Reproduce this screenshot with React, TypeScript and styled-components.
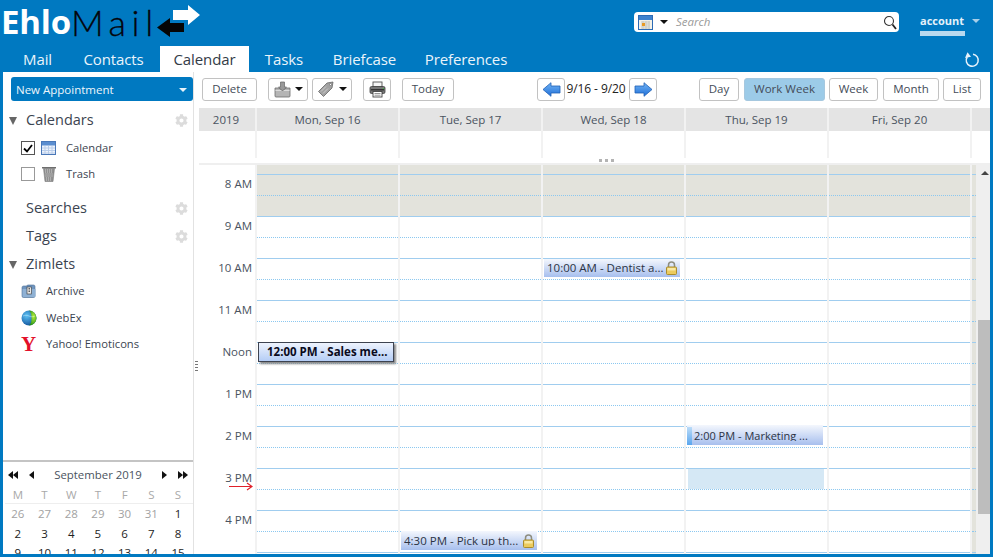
import React from "react";
import styled, { createGlobalStyle } from "styled-components";
import { FaCog } from "react-icons/fa";

const FONT = `"Open Sans", "Noto Sans", "Liberation Sans", sans-serif`;

const Global = createGlobalStyle`
  html, body { margin: 0; padding: 0; height: 100%; overflow: hidden; background: #0079c1; }
  * { box-sizing: border-box; }
`;

const Page = styled.div`
  width: 993px; height: 557px; display: flex; flex-direction: column;
  background: #0079c1; padding: 0 3px 3px; font-family: ${FONT}; color: #333; overflow: hidden;
`;
const Header = styled.header`height: 46px; display: flex; align-items: flex-start; flex: none;`;
const Logo = styled.div`display: flex; align-items: flex-start; width: 631px; height: 46px;`;
const LogoStrong = styled.span`font: 700 33px/44px "Open Sans", sans-serif; color: #fff; letter-spacing: -.2px; margin-left: -2px;`;
const LogoThin = styled.span`display: block; width: 86px; font: 300 36px/44px Lato, sans-serif; color: #05050c; letter-spacing: 5.6px; -webkit-text-stroke: .3px #05050c;`;
const LogoArrows = styled.svg`margin: 4px 0 0 0; flex: none;`;

const SearchBox = styled.div`
  width: 265px; height: 20px; margin-top: 12px; background: #fff; border-radius: 4px;
  display: flex; align-items: center; padding: 0 2px 0 4px; flex: none;
`;
const SearchCaret = styled.span`
  width: 0; height: 0; border: 4px solid transparent; border-top: 4px solid #111; border-bottom: 0; margin: 0 8px 0 7px;
`;
const SearchText = styled.span`font: italic 11.5px/1 ${FONT}; color: #9a9a9a; flex: 1;`;
const Account = styled.div`margin: 13px 0 0 21px; display: flex; align-items: flex-start; flex: none;`;
const AccountName = styled.span`
  font: 700 11px/15px ${FONT}; color: #e4f1fa; padding-bottom: 5px; width: 45px; display: block;
  border-bottom: 5px solid #b9d9ef; height: 23px;
`;
const AccountCaret = styled.span`
  width: 0; height: 0; border: 4px solid transparent; border-top: 4px solid #a9cfe9; border-bottom: 0; margin: 6px 0 0 7px;
`;

const TabBar = styled.nav`height: 26px; display: flex; align-items: stretch; flex: none; padding-left: 5px;`;
const Tab = styled.div<{ $w: number; $active?: boolean }>`
  width: ${(p) => p.$w}px; text-align: center; font: 400 15px/27px ${FONT}; letter-spacing: -.1px;
  color: ${(p) => (p.$active ? "#333b47" : "#eaf4fb")}; background: ${(p) => (p.$active ? "#fff" : "transparent")};
`;
const RefreshWrap = styled.div`margin-left: auto; margin-right: 10px; padding-top: 5px;`;

const Body = styled.div`flex: 1; min-height: 0; display: flex; background: #fff;`;
const Sidebar = styled.aside`width: 191px; flex: none; border-right: 1px solid #e2e2e2; display: flex; flex-direction: column; overflow: hidden;`;
const NewButton = styled.div`
  margin: 5px 0 0 8px; height: 24px; width: 182px; background: #0079c1; border-radius: 3px; flex: none;
  display: flex; align-items: center; justify-content: space-between; padding: 1px 6px 0 5px;
  font: 400 11.5px/1 ${FONT}; color: #eef6fb;
`;
const WhiteCaret = styled.span`width: 0; height: 0; border: 4px solid transparent; border-top: 4px solid #e8f3fa; border-bottom: 0;`;
const Tree = styled.div`flex: 1; padding-top: 7px;`;
const Section = styled.div<{ $mt?: number }>`
  height: 24px; display: flex; align-items: center; padding: 1px 5px 0 6px; margin-top: ${(p) => p.$mt ?? 0}px;
  font: 400 14.5px/1 ${FONT}; color: #3b4450;
`;
const Triangle = styled.span`width: 0; height: 0; border-left: 4px solid transparent; border-right: 4px solid transparent; border-top: 8px solid #666; margin-right: 9px; flex: none;`;
const NoTriangle = styled.span`width: 17px; flex: none;`;
const SectionLabel = styled.span`flex: 1;`;
const Row = styled.div<{ $h?: number; $mt?: number }>`
  height: ${(p) => p.$h ?? 26}px; margin-top: ${(p) => p.$mt ?? 0}px; display: flex; align-items: center; padding-left: 18px;
  font: 400 11.2px/1 ${FONT}; color: #3b4450;
`;
const Check = styled.span<{ $on?: boolean }>`
  width: 14px; height: 14px; border: 1px solid ${(p) => (p.$on ? "#555" : "#999")}; background: #fff; flex: none;
  display: flex; align-items: center; justify-content: center; margin-right: 6px;
`;
const RowIcon = styled.span<{ $w: number }>`width: ${(p) => p.$w}px; display: flex; justify-content: flex-start; align-items: center; flex: none;`;
const YahooMark = styled.span`font: 700 21px/1 "Liberation Serif", serif; color: #e3102a;`;

const MiniCal = styled.div`height: 94px; border-top: 2px solid #c4c4c4; flex: none; padding: 0 0 0 1.5px; overflow: hidden;`;
const MiniHead = styled.div`
  height: 26px; display: flex; align-items: center; justify-content: space-between; padding: 0 5px 0 3.5px;
  font: 400 11.4px/1 ${FONT}; color: #4a5360;
`;
const MiniNavGroup = styled.span`display: flex; gap: 11px; align-items: center; color: #111;`;
const MiniGrid = styled.div`display: grid; grid-template-columns: repeat(7, 26.7px); justify-content: start;`;
const MiniWeek = styled(MiniGrid)`border-bottom: 1px solid #eee; height: 16px;`;
const MiniCell = styled.span<{ $tone?: "head" | "dim" }>`
  height: 19.5px; text-align: center; font: 400 11.5px/20px ${FONT};
  color: ${(p) => (p.$tone === "head" ? "#a9a9a9" : p.$tone === "dim" ? "#a2a2a2" : "#222")};
`;
const MiniHeadCell = styled(MiniCell)`height: 16px; line-height: 14px;`;

const Sash = styled.div`width: 5px; flex: none; display: flex; align-items: center; justify-content: center; padding-top: 108px;`;
const Grip = styled.span`width: 3px; height: 12px; background: repeating-linear-gradient(#777 0 1px, transparent 1px 3px);`;

const Main = styled.main`flex: 1; min-width: 0; display: flex; flex-direction: column;`;
const Toolbar = styled.div`height: 36px; flex: none; display: flex; align-items: flex-start; padding: 6px 0 0 3px;`;
const Btn = styled.div<{ $w: number; $ml?: number; $on?: boolean }>`
  width: ${(p) => p.$w}px; height: 23px; margin-left: ${(p) => p.$ml ?? 0}px; flex: none;
  border: 1px solid ${(p) => (p.$on ? "#a6c8df" : "#c2c2c2")}; border-radius: 3px;
  background: ${(p) => (p.$on ? "#9ccbe8" : "#fff")};
  display: flex; align-items: center; justify-content: center; gap: 4px; padding-bottom: 1px;
  font: 400 11.5px/1 ${FONT}; color: #444c58;
`;
const BlackCaret = styled.span`width: 0; height: 0; border: 4px solid transparent; border-top: 4px solid #111; border-bottom: 0;`;
const RangeText = styled.span`width: 64px; flex: none; text-align: center; font: 400 12px/22px ${FONT}; color: #222; letter-spacing: -.1px; padding-right: 2px;`;

const HeaderRow = styled.div`height: 23px; display: flex; flex: none; background: #e4e4e4; font: 400 11.5px/23px ${FONT}; color: #4a5360;`;
const YearCell = styled.div`width: 58px; text-align: center; flex: none; border-right: 2px solid #f2f2f2; padding-right: 2px;`;
const DayCell = styled.div`width: 143px; text-align: center; flex: none; border-right: 2px solid #f2f2f2;`;
const AllDayRow = styled.div`height: 27px; display: flex; flex: none;`;
const AllDayHead = styled.div`width: 58px; flex: none; border-right: 2px solid #f2f2f2;`;
const AllDayCell = styled.div`width: 143px; flex: none; border-right: 2px solid #f2f2f2;`;
const AllDayResize = styled.div`
  height: 7px; flex: none; border-bottom: 2px solid #efefef; display: flex; justify-content: flex-start;
  padding-left: 400px; gap: 3px;
`;
const ResizeDot = styled.span`width: 3px; height: 3px; background: #b3b3b3; margin-top: 1px;`;

const GridWrap = styled.div`flex: 1; min-height: 0; display: flex; overflow: hidden;`;
const TimeCol = styled.div`width: 58px; flex: none; border-right: 2px solid #f2f2f2; padding-top: 10px; position: relative;`;
const TimeLabel = styled.div`height: 42px; text-align: right; padding-right: 3px; font: 400 11.5px/17px ${FONT}; color: #4a5360;`;
const NowArrow = styled.svg`position: absolute; left: 30px; top: 317px;`;
const DayCol = styled.div`width: 143px; flex: none; border-right: 2px solid #f2f2f2; position: relative;`;
const LeadSlot = styled.div`height: 10px; background: #e3e3dc; border-bottom: 1px solid #a0cdef;`;
const HourSlot = styled.div<{ $off?: boolean }>`
  height: 42px; position: relative; border-bottom: 1px solid #a0cdef;
  background: ${(p) => (p.$off ? "#e3e3dc" : "#fff")};
  &::after { content: ""; position: absolute; left: 0; right: 0; top: 20px; border-top: 1px dotted #8cc8f0; }
`;
const Strip = styled.div`width: 4px; flex: none;`;
const StripLead = styled(LeadSlot)``;
const StripSlot = styled(HourSlot)`background: #e3e3dc;`;
const Scrollbar = styled.div`width: 14px; flex: none; background: #efefef; position: relative;`;
const ScrollUp = styled.span`
  position: absolute; left: 5px; top: 6px; width: 0; height: 0; border-left: 4px solid transparent;
  border-right: 4px solid transparent; border-bottom: 4px solid #444;
`;
const ScrollThumb = styled.div`position: absolute; left: 2px; right: 0; top: 155px; height: 194px; background: #bdbdbd;`;

const Event = styled.div<{ $top: number; $sel?: boolean; $h?: number }>`
  position: absolute; left: 1px; width: 136px; top: ${(p) => p.$top}px; height: ${(p) => p.$h ?? 19}px;
  display: flex; align-items: center; padding: 0 3px 0 ${(p) => (p.$sel ? 8 : 3)}px; z-index: 2;
  font: ${(p) => (p.$sel ? 700 : 400)} 11.5px/1 ${FONT}; color: ${(p) => (p.$sel ? "#0a0a20" : "#2b3344")}; white-space: nowrap;
  background: ${(p) => (p.$sel ? "linear-gradient(#eef3fd, #b4cdf6)" : "linear-gradient(#f4f7fd, #a7bfee)")};
  ${(p) => (p.$sel ? "border: 1px solid #3d4350; box-shadow: 2px 2px 2px #888;" : "")}
`;
const EventStripe = styled.span`position: absolute; left: 0; top: 2px; bottom: 0; width: 5px; background: linear-gradient(#bcdcf8, #5aa6ee);`;
const EventText = styled.span<{ $pad?: number; $size?: number }>`
  flex: 1; overflow: hidden; position: relative; padding-left: ${(p) => p.$pad ?? 0}px;
  ${(p) => (p.$size ? `font-size: ${p.$size}px;` : "")}
`;
const Highlight = styled.div`position: absolute; left: 2px; top: 304px; width: 136px; height: 20px; background: #d5e8f5; z-index: 1;`;

const MiniCalendarIcon = () => (
  <svg width="15" height="14" viewBox="0 0 15 14">
    <rect x=".5" y=".5" width="14" height="13" fill="#eef3fb" stroke="#4a78b8" />
    <rect x="1" y="1" width="13" height="3.5" fill="#5b8ed0" />
    <path d="M1 7h13M1 9.5h13M1 12h13M4 5v8M7.5 5v8M11 5v8" stroke="#b9cdea" strokeWidth="1" />
  </svg>
);
const SearchCalIcon = () => (
  <svg width="15" height="15" viewBox="0 0 15 15">
    <rect x=".5" y=".5" width="14" height="14" fill="#f3f1e8" stroke="#2d6bb5" />
    <rect x="1" y="1" width="13" height="4" fill="#3e83cf" />
    <path d="M3 7h9M3 9h9M3 11h9M3 13h9M5 6v8M8 6v8M11 6v8" stroke="#c9c9c0" strokeWidth="1" />
    <rect x="4" y="8" width="3" height="3" fill="#e89a23" />
  </svg>
);
const TrashIcon = () => (
  <svg width="16" height="16" viewBox="0 0 16 16">
    <path d="M1 1h14v1.500H1z" fill="#6e6e6e" />
    <path d="M2.500 2.500h11L12 15.500H4z" fill="#8f8f8f" stroke="#7a7a7a" strokeWidth=".6" />
    <path d="M4 4h8M4 6h8M4.500 8h7M4.500 10h7M5 12h6M5 14h6" stroke="#d6d6d6" strokeWidth=".9" strokeDasharray="1 1" />
  </svg>
);
const ArchiveIcon = () => (
  <svg width="16" height="14" viewBox="0 0 16 14">
    <path d="M1 3.500q0-1.500 1.500-1.500h3l1-1h6q1.500 0 1.500 1.500V12q0 1.500-1.500 1.500h-10Q1 13.500 1 12z" fill="#6f95bf" stroke="#4d6f96" strokeWidth=".6" />
    <path d="M1.500 5h13v7q0 1-1 1h-11q-1 0-1-1z" fill="#8fb1d4" />
    <rect x="6" y="3" width="4.500" height="7" fill="#e8e8e8" stroke="#333" strokeWidth=".6" />
    <path d="M7.500 4.500h1.500M7.500 6h1.500M7.500 7.500h1.500" stroke="#222" strokeWidth=".7" />
  </svg>
);
const WebExIcon = () => (
  <svg width="16" height="16" viewBox="0 0 16 16">
    <defs>
      <radialGradient id="wxb" cx=".35" cy=".35" r=".8"><stop offset="0" stopColor="#5cc2f4" /><stop offset="1" stopColor="#07438f" /></radialGradient>
      <radialGradient id="wxg" cx=".6" cy=".4" r=".7"><stop offset="0" stopColor="#b6ee3a" /><stop offset="1" stopColor="#1a8a14" /></radialGradient>
    </defs>
    <circle cx="8" cy="8" r="7.500" fill="url(#wxb)" />
    <path d="M8 .5a7.500 7.500 0 0 1 0 15c2-2 2.500-4.500 2.500-7.500S10 2.500 8 .5z" fill="url(#wxg)" />
    <path d="M2 6c2-1 4-1 6 0 2 1 4 1 6 0" stroke="#e8f7ff" strokeWidth=".6" fill="none" opacity=".7" />
  </svg>
);
const MoveIcon = () => (
  <svg width="17" height="17" viewBox="0 0 17 17">
    <path d="M1 7h4l1 1h5l1-1h4v8q0 1-1 1H2q-1 0-1-1z" fill="#b5b5b5" stroke="#6c6c6c" strokeWidth=".8" />
    <path d="M1.500 9.500h14" stroke="#dcdcdc" />
    <path d="M6.500 1h4v5h2l-4 4-4-4h2z" fill="#999" stroke="#666" strokeWidth=".7" />
  </svg>
);
const TagIcon = () => (
  <svg width="18" height="17" viewBox="0 0 18 17">
    <path d="M1.500 10.500 10 2l6-1-1 6-8.500 8.500z" fill="#a2a2a2" stroke="#666" strokeWidth=".8" />
    <path d="M4 10.500l5-5M6 12.500l5-5" stroke="#d5d5d5" strokeWidth=".8" />
    <circle cx="13.500" cy="3.500" r="1" fill="#fff" stroke="#555" strokeWidth=".5" />
  </svg>
);
const PrintIcon = () => (
  <svg width="17" height="17" viewBox="0 0 17 17">
    <rect x="4" y="1" width="9" height="5" fill="#f5f5f5" stroke="#555" strokeWidth=".9" />
    <rect x="1" y="5.500" width="15" height="7" rx="1.500" fill="#777" stroke="#3f3f3f" strokeWidth=".8" />
    <rect x="2" y="8" width="13" height="1.500" fill="#333" />
    <rect x="4" y="10.500" width="9" height="5.500" fill="#fff" stroke="#444" strokeWidth=".9" />
    <path d="M5.500 12.500h6M5.500 14.200h6" stroke="#666" strokeWidth=".7" />
    <rect x="14" y="7" width="1" height="1" fill="#3fbf3f" />
  </svg>
);
const NavArrow = ({ dir }: { dir: "left" | "right" }) => (
  <svg width="19" height="15" viewBox="0 0 19 15">
    <defs><linearGradient id={`nav${dir}`} x1="0" y1="0" x2="0" y2="1"><stop offset="0" stopColor="#72b4f4" /><stop offset="1" stopColor="#1f6fd8" /></linearGradient></defs>
    <path
      d={dir === "right" ? "M1 4h9V.7L18 7.500 10 14.300V11H1z" : "M18 4H9V.7L1 7.500 9 14.300V11h9z"}
      fill={`url(#nav${dir})`} stroke="#1f5fb5" strokeWidth=".8"
    />
  </svg>
);
const LockIcon = () => (
  <svg width="11" height="14" viewBox="0 0 11 14" style={{ flex: "none" }}>
    <path d="M2.500 6V4a3 3 0 0 1 6 0v2" fill="none" stroke="#8d8d80" strokeWidth="1.500" />
    <rect x=".5" y="6" width="10" height="7.500" rx="1" fill="#eccb5e" stroke="#a98c2e" />
    <rect x="1.500" y="7" width="8" height="2.500" fill="#f8e9a6" />
  </svg>
);
const Gear = () => <FaCog size={13} color="#dcdcdc" />;
const SkipGlyph = ({ dir, double }: { dir: "l" | "r"; double?: boolean }) => (
  <svg width={double ? 10 : 5} height="8" viewBox={double ? "0 0 10 8" : "0 0 5 8"}>
    {dir === "l" ? (
      <path d={double ? "M5 0v8L0 4zM10 0v8L5 4z" : "M5 0v8L0 4z"} fill="#111" />
    ) : (
      <path d={double ? "M0 0v8l5-4zM5 0v8l5-4z" : "M0 0v8l5-4z"} fill="#111" />
    )}
  </svg>
);

const days = ["Mon, Sep 16", "Tue, Sep 17", "Wed, Sep 18", "Thu, Sep 19", "Fri, Sep 20"];
const hours = ["8 AM", "9 AM", "10 AM", "11 AM", "Noon", "1 PM", "2 PM", "3 PM", "4 PM"];
const slots = Array.from({ length: 10 }, (_, i) => i);
const miniWeeks = [
  ["26", "27", "28", "29", "30", "31", "1"],
  ["2", "3", "4", "5", "6", "7", "8"],
  ["9", "10", "11", "12", "13", "14", "15"],
];

export default function App() {
  return (
    <Page>
      <Global />
      <Header>
        <Logo>
          <LogoStrong>Ehlo</LogoStrong>
          <LogoThin>Mail</LogoThin>
          <LogoArrows width="44" height="34" viewBox="0 0 44 34">
            <path d="M16 6H31V1L43 11 31 21V16H16z" fill="#fff" />
            <path d="M27 19H13V14L0 23.500 13 33V28H27z" fill="#050505" />
          </LogoArrows>
        </Logo>
        <SearchBox>
          <SearchCalIcon />
          <SearchCaret />
          <SearchText>Search</SearchText>
          <svg width="14" height="15" viewBox="0 0 14 15">
            <circle cx="6" cy="6" r="4.500" fill="none" stroke="#333" strokeWidth="1.100" />
            <path d="M9.500 9.500 13 14" stroke="#222" strokeWidth="1.800" />
          </svg>
        </SearchBox>
        <Account>
          <AccountName>account</AccountName>
          <AccountCaret />
        </Account>
      </Header>
      <TabBar>
        <Tab $w={59}>Mail</Tab>
        <Tab $w={93}>Contacts</Tab>
        <Tab $w={89} $active>Calendar</Tab>
        <Tab $w={70}>Tasks</Tab>
        <Tab $w={91}>Briefcase</Tab>
        <Tab $w={112}>Preferences</Tab>
        <RefreshWrap>
          <svg width="16" height="16" viewBox="0 0 16 16">
            <path d="M9 2.300A6 6 0 1 1 3.200 5" fill="none" stroke="#e6f2fb" strokeWidth="1.500" />
            <path d="M3.500 .3 7 4.800 1 6z" fill="#e6f2fb" />
          </svg>
        </RefreshWrap>
      </TabBar>
      <Body>
        <Sidebar>
          <NewButton>New Appointment<WhiteCaret /></NewButton>
          <Tree>
            <Section><Triangle /><SectionLabel>Calendars</SectionLabel><Gear /></Section>
            <Row $mt={3}><Check $on><svg width="10" height="9" viewBox="0 0 10 9"><path d="M1 4.500 4 7.500 9 1" fill="none" stroke="#000" strokeWidth="1.800" /></svg></Check><RowIcon $w={25}><MiniCalendarIcon /></RowIcon>Calendar</Row>
            <Row><Check /><RowIcon $w={25}><TrashIcon /></RowIcon>Trash</Row>
            <Section $mt={9}><NoTriangle /><SectionLabel>Searches</SectionLabel><Gear /></Section>
            <Section $mt={4}><NoTriangle /><SectionLabel>Tags</SectionLabel><Gear /></Section>
            <Section $mt={4}><Triangle /><SectionLabel>Zimlets</SectionLabel></Section>
            <Row $mt={2}><RowIcon $w={25}><ArchiveIcon /></RowIcon>Archive</Row>
            <Row $h={27}><RowIcon $w={25}><WebExIcon /></RowIcon>WebEx</Row>
            <Row><RowIcon $w={25}><YahooMark>Y</YahooMark></RowIcon>Yahoo! Emoticons</Row>
          </Tree>
          <MiniCal>
            <MiniHead>
              <MiniNavGroup><SkipGlyph dir="l" double /><SkipGlyph dir="l" /></MiniNavGroup>
              September 2019
              <MiniNavGroup><SkipGlyph dir="r" /><SkipGlyph dir="r" double /></MiniNavGroup>
            </MiniHead>
            <MiniWeek>
              {["M", "T", "W", "T", "F", "S", "S"].map((d, i) => (
                <MiniHeadCell key={i} $tone="head">{d}</MiniHeadCell>
              ))}
            </MiniWeek>
            <MiniGrid>
              {miniWeeks.flatMap((w, wi) =>
                w.map((d, i) => (
                  <MiniCell key={`${wi}-${i}`} $tone={wi === 0 && i < 6 ? "dim" : undefined}>{d}</MiniCell>
                ))
              )}
            </MiniGrid>
          </MiniCal>
        </Sidebar>
        <Sash><Grip /></Sash>
        <Main>
          <Toolbar>
            <Btn $w={55}>Delete</Btn>
            <Btn $w={40} $ml={11}><MoveIcon /><BlackCaret /></Btn>
            <Btn $w={40} $ml={4}><TagIcon /><BlackCaret /></Btn>
            <Btn $w={28} $ml={11}><PrintIcon /></Btn>
            <Btn $w={52} $ml={11}>Today</Btn>
            <Btn $w={28} $ml={83}><NavArrow dir="left" /></Btn>
            <RangeText>9/16 - 9/20</RangeText>
            <Btn $w={28}><NavArrow dir="right" /></Btn>
            <Btn $w={40} $ml={42}>Day</Btn>
            <Btn $w={81} $ml={5} $on>Work Week</Btn>
            <Btn $w={49} $ml={4}>Week</Btn>
            <Btn $w={56} $ml={5}>Month</Btn>
            <Btn $w={38} $ml={4}>List</Btn>
          </Toolbar>
          <HeaderRow>
            <YearCell>2019</YearCell>
            {days.map((d) => <DayCell key={d}>{d}</DayCell>)}
          </HeaderRow>
          <AllDayRow>
            <AllDayHead />
            {days.map((d) => <AllDayCell key={d} />)}
          </AllDayRow>
          <AllDayResize><ResizeDot /><ResizeDot /><ResizeDot /></AllDayResize>
          <GridWrap>
            <TimeCol>
              {hours.map((h) => <TimeLabel key={h}>{h}</TimeLabel>)}
              <NowArrow width="24" height="9" viewBox="0 0 24 9">
                <path d="M0 4.500h22M18 1l5 3.500L18 8" fill="none" stroke="#e0202a" strokeWidth="1.200" />
              </NowArrow>
            </TimeCol>
            {days.map((d, i) => (
              <DayCol key={d}>
                <LeadSlot />
                {slots.map((s) => <HourSlot key={s} $off={s === 0} />)}
                {i === 0 && (
                  <Event $top={177} $h={20} $sel><EventText>12:00 PM - Sales me...</EventText></Event>
                )}
                {i === 1 && (
                  <Event $top={366}><EventText>4:30 PM - Pick up th...</EventText><LockIcon /></Event>
                )}
                {i === 2 && (
                  <Event $top={94} $h={18}><EventText>10:00 AM - Dentist a...</EventText><LockIcon /></Event>
                )}
                {i === 3 && (
                  <>
                    <Event $top={260} $h={20}><EventStripe /><EventText $pad={4} $size={11}>2:00 PM - Marketing ...</EventText></Event>
                    <Highlight />
                  </>
                )}
              </DayCol>
            ))}
            <Strip>
              <StripLead />
              {slots.map((s) => <StripSlot key={s} />)}
            </Strip>
            <Scrollbar>
              <ScrollUp />
              <ScrollThumb />
            </Scrollbar>
          </GridWrap>
        </Main>
      </Body>
    </Page>
  );
}
